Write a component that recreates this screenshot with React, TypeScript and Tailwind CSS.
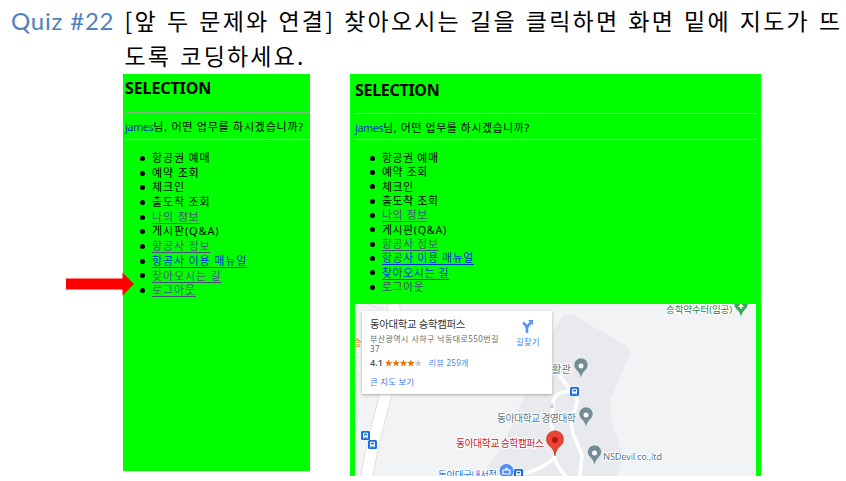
import React from 'react';

const sans = "font-['Noto_Sans','Noto_Sans_CJK_KR',sans-serif]";

type Item = { text: string; style: string };

const plain = 'text-black';
const visited = 'text-[#4a4f7a] underline';
const link = 'text-[#0030d8] underline';

const leftItems: Item[] = [
  { text: '항공권 예매', style: plain },
  { text: '예약 조회', style: plain },
  { text: '체크인', style: plain },
  { text: '출도착 조회', style: plain },
  { text: '나의 정보', style: visited },
  { text: '게시판(Q&A)', style: plain },
  { text: '항공사 정보', style: visited },
  { text: '항공사 이용 매뉴얼', style: link },
  { text: '찾아오시는 길', style: visited },
  { text: '로그아웃', style: visited },
];

const rightItems: Item[] = leftItems.map((item) => {
  if (item.text === '찾아오시는 길') return { ...item, style: link };
  if (item.text === '로그아웃') return { ...item, style: 'text-[#40506a]' };
  return item;
});

function Menu({ items, row }: { items: Item[]; row: string }) {
  return (
    <ul>
      {items.map((item) => (
        <li key={item.text} className={`flex items-center whitespace-nowrap ${row}`}>
          <span className="mr-[7px] size-[5px] shrink-0 rounded-full bg-black" />
          <span className={`underline-offset-2 ${item.style}`}>{item.text}</span>
        </li>
      ))}
    </ul>
  );
}

function Pin({ x, y, fill, children }: { x: number; y: number; fill: string; children?: React.ReactNode }) {
  return (
    <g transform={`translate(${x} ${y})`}>
      <path d="M0 20C-.9 15.5-2 13.8-4.300 11.400A7 7 0 1 1 4.300 11.400C2 13.800 .9 15.500 0 20Z" fill={fill} stroke="#fff" strokeWidth=".5" />
      {children ?? <circle cy="7" r="2.500" fill="#fff" />}
    </g>
  );
}

function Bus({ x, y }: { x: number; y: number }) {
  return (
    <g transform={`translate(${x} ${y})`}>
      <rect width="9" height="9" rx="1.500" fill="#1a6fe0" />
      <rect x="2" y="1.800" width="5" height="4.800" rx="1" fill="#fff" />
      <rect x="3" y="2.800" width="3" height="1.600" fill="#1a6fe0" />
      <path d="M2.800 6.300v1.200M6.200 6.300v1.200" stroke="#fff" />
    </g>
  );
}

function MapDrawing() {
  const label = { paintOrder: 'stroke', stroke: '#fff', strokeWidth: 2, strokeLinejoin: 'round' } as const;
  return (
    <svg width="401" height="172" viewBox="0 0 401 172" className={`block ${sans}`}>
      <rect width="401" height="172" fill="#f1f3f4" />
      <path d="M208 12Q214 9 220 12L270 41Q277 45 275 50L256 94Q253 104 257 117L268 151L262 172H125Q137 158 147 143L199 25Z" fill="#e8eaed" />
      <path d="M38 0Q46 29 37 63C30 99 19 128 12 172" fill="none" stroke="#dfe1e4" strokeWidth="13" />
      <path d="M38 0Q46 29 37 63C30 99 19 128 12 172" fill="none" stroke="#fff" strokeWidth="11" />
      <g fill="none" stroke="#dfe1e4" strokeWidth="1">
        <path d="M0 53H8M0 71H8M0 80H8M0 98L3 103V113L0 120" />
        <path d="M14 0Q24 7 28 3" />
      </g>
      <g fill="none" stroke="#fff" strokeWidth="3.500">
        <path d="M204 71L212 82L218 87M218 87Q199 87 198 99L196 119L199 133L200 153" />
        <path d="M221 90Q224 97 219 108Q214 120 219 132L227 151L225 172" />
        <path d="M200 153Q191 163 169 170M199 153Q202 163 212 174" />
      </g>
      <path d="M197 99v5m-2-2 2 2 2-2" fill="none" stroke="#9aa0a6" strokeWidth=".7" />
      <Bus x={215} y={83} />
      <Bus x={6} y={127} />
      <Bus x={13} y={136} />
      <Bus x={159} y={165} />
      <text {...label} x="311" y="9" textLength="66" fontSize="9.500" fill="#278447">승학약수터(임공)</text>
      <Pin x={386} y={-6} fill="#34a853"><path d="M0 3L-2 6H2ZM0 5L-3 9H3ZM-.7 9H.7V11H-.7Z" fill="#fff" /></Pin>
      <text {...label} x="187" y="69" fontSize="10.500" fill="#5f7782">생활관</text>
      <Pin x={226} y={55} fill="#728c98" />
      <text {...label} x="142" y="118" textLength="79" fontSize="10" fill="#5f7782">동아대학교 경영대학</text>
      <Pin x={231} y={104} fill="#728c98" />
      <text {...label} x="101" y="143" textLength="88" fontSize="10" fill="#c5221f">동아대학교 승학캠퍼스</text>
      <path d="M200 152C199 146 197 144 194.200 141.500A8.500 8.500 0 1 1 205.800 141.500C203 144 201 146 200 152Z" fill="#ea4335" stroke="#b3261e" strokeWidth=".6" />
      <circle cx="200" cy="136" r="3" fill="#b31412" />
      <text {...label} x="248" y="155.500" textLength="59" fontSize="9.500" fill="#5f7782">NSDevil co.,ltd</text>
      <Pin x={239.500} y={142} fill="#728c98" />
      <text {...label} x="83" y="173.500" textLength="59" fontSize="9.500" fill="#1a73e8">동아대구내서점</text>
      <circle cx="151.500" cy="167" r="7" fill="#4f8df5" />
      <path d="M148 166h7v4h-7zM150 166q1.500-4 3 0" fill="none" stroke="#fff" strokeWidth="1.200" />
      <text x="-2" y="42" fontSize="9.500" fill="#e37400">승</text>
    </svg>
  );
}

function PlaceCard() {
  return (
    <div className="absolute left-[6.500px] top-[6.500px] flex h-[83px] w-[190px] justify-between rounded-[1px] bg-white pl-[8.500px] pr-[12px] shadow-[0_1px_3px_rgba(0,0,0,0.3)]">
      <div className="w-[132px] whitespace-nowrap">
        <div className="mt-[6px] h-[14px] text-[10.400px] leading-[14px] tracking-[-0.300px] text-[#333]">동아대학교 승학캠퍼스</div>
        <div className="mt-[3px] text-[8px] leading-[10px] tracking-[0.420px] text-[#6b6b6b]">부산광역시 사하구 낙동대로550번길<br />37</div>
        <div className="mt-[3px] flex h-[13px] items-center text-[8px]">
          <b className="mr-[2px] text-[9px] font-semibold text-[#555]">4.1</b>
          <svg width="37" height="8" viewBox="0 0 37 8">
            {[0, 1, 2, 3, 4].map((i) => (
              <path key={i} transform={`translate(${i * 7.4} 0)`} d="M3.700 .3L4.700 2.900L7.400 3L5.300 4.800L6 7.500L3.700 6L1.400 7.500L2.100 4.800L0 3L2.700 2.900Z" fill={i < 4 ? '#e77712' : '#c8c8c8'} />
            ))}
          </svg>
          <span className="ml-[7px] tracking-[0.300px] text-[#3f82ed]">리뷰 259개</span>
        </div>
        <div className="mt-[5px] text-[8.500px] leading-[13px] tracking-[0.100px] text-[#3f82ed]">큰 지도 보기</div>
      </div>
      <div className="flex flex-col items-center pt-[9px] text-[#3f82ed]">
        <svg width="13" height="14" viewBox="0 0 13 14">
          <path d="M6 13V9Q6 6 2 2.500M6 8Q6.500 5 10 3" fill="none" stroke="#5b91f5" strokeWidth="2.600" />
          <path d="M7 0H12V5Z" fill="#5b91f5" />
        </svg>
        <span className="mt-[2px] whitespace-nowrap text-[8.500px] leading-[12px]">길찾기</span>
      </div>
    </div>
  );
}

export default function App() {
  return (
    <main className={`h-[481px] w-[846px] overflow-hidden bg-white ${sans}`}>
      <header className="flex h-[74px] pl-[11px] pt-[3px] leading-[35px]">
        <div className="w-[113.500px] shrink-0 whitespace-nowrap font-['Lato',sans-serif] text-[24px] tracking-[0.800px] text-[#4f81bd]">Quiz #22</div>
        <h1 className="whitespace-nowrap font-['Noto_Sans_CJK_KR',sans-serif] text-[23px] font-normal tracking-[2.200px] [word-spacing:1.700px]">
          [앞 두 문제와 연결] 찾아오시는 길을 클릭하면 화면 밑에 지도가 뜨<br />도록 코딩하세요.
        </h1>
      </header>
      <div className="flex items-start">
        <div className="flex h-[397px] w-[123px] shrink-0 pl-[66px] pt-[198px]">
          <svg width="68" height="24" viewBox="0 0 68 24" className="relative shrink-0">
            <path d="M0 6.500H56.500V.5L68 12L56.500 23.500V17.500H0Z" fill="#f00" />
          </svg>
        </div>
        <section className="h-[397px] w-[187px] shrink-0 bg-[#0f0]">
          <h2 className="ml-[2px] h-[38px] pt-[3px] text-[16px] font-bold leading-[22px] tracking-[-0.100px]">SELECTION</h2>
          <hr className="ml-[2px] border-[#78b878]" />
          <p className="ml-[2px] h-[26px] whitespace-nowrap text-[11px] leading-[27px] tracking-[0.750px]"><span className="tracking-[-0.500px] text-[#0030d8]">james</span>님, 어떤 업무를 하시겠습니까?</p>
          <hr className="ml-[2px] border-[#b4f0b4]" />
          <div className="pl-[17px] pt-[11px] text-[11px] tracking-[0.850px]"><Menu items={leftItems} row="h-[14.700px] leading-[14.700px]" /></div>
        </section>
        <section className="ml-[40px] h-[402px] w-[411px] shrink-0 bg-[#0f0] px-[5px]">
          <h2 className="h-[39px] pt-[5px] text-[16px] font-bold leading-[22px] tracking-[-0.300px]">SELECTION</h2>
          <hr className="border-[#b4e0b4]" />
          <p className="h-[25px] whitespace-nowrap text-[10.800px] leading-[27px] tracking-[0.670px]"><span className="tracking-[-0.400px] text-[#0030d8]">james</span>님, 어떤 업무를 하시겠습니까?</p>
          <hr className="border-[#b4e0b4]" />
          <div className="h-[164px] pl-[15px] pt-[11px] text-[10.800px] tracking-[0.680px]"><Menu items={rightItems} row="h-[14.330px] leading-[14.330px]" /></div>
          <div className="relative h-[172px] overflow-hidden">
            <MapDrawing />
            <PlaceCard />
          </div>
        </section>
      </div>
    </main>
  );
}
